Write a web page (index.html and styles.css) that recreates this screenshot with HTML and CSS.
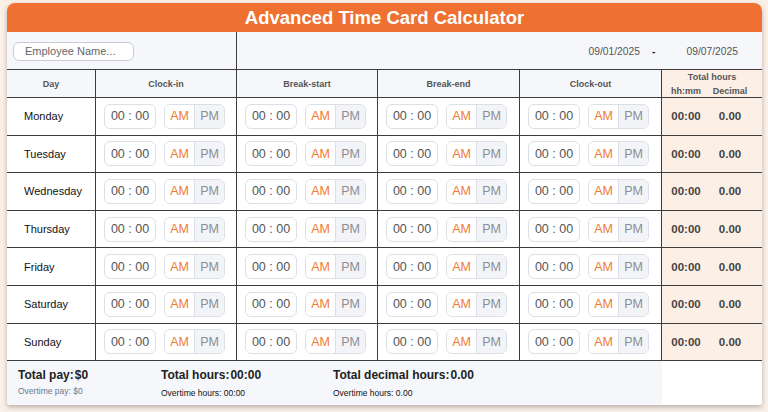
FILE: index.html
```html
<!DOCTYPE html>
<html lang="en">
<head>
<meta charset="utf-8">
<title>Advanced Time Card Calculator</title>
<link rel="stylesheet" href="styles.css">
</head>
<body>
<div class="card">
  <div class="title">Advanced Time Card Calculator</div>
  <div class="grid">
    <div class="cell top name-cell"><div class="name-input">Employee Name...</div></div>
    <div class="cell top dates-cell">
      <span class="date">09/01/2025</span><span class="dash">-</span><span class="date">09/07/2025</span>
    </div>

    <div class="cell head">Day</div>
    <div class="cell head">Clock-in</div>
    <div class="cell head">Break-start</div>
    <div class="cell head">Break-end</div>
    <div class="cell head">Clock-out</div>
    <div class="cell head total-head last">
      <div class="th-title">Total hours</div>
      <div class="th-sub"><span>hh:mm</span><span>Decimal</span></div>
    </div>
  </div>
  <div class="grid rows" id="rows"></div>
  <div class="footer">
    <div class="footer-main">
      <div class="sum">
        <div class="big">Total pay:<span>$0</span></div>
        <div class="small blue">Overtime pay: $0</div>
      </div>
      <div class="sum">
        <div class="big">Total hours:<span>00:00</span></div>
        <div class="small low">Overtime hours: 00:00</div>
      </div>
      <div class="sum">
        <div class="big">Total decimal hours:<span>0.00</span></div>
        <div class="small low">Overtime hours: 0.00</div>
      </div>
    </div>
    <div class="footer-side"></div>
  </div>
</div>
<script>
  var days = ["Monday","Tuesday","Wednesday","Thursday","Friday","Saturday","Sunday"];
  var rows = document.getElementById("rows");
  var timeCell = '<div class="cell time"><div class="tbox">00 : 00</div><div class="ampm"><span class="am">AM</span><span class="pm">PM</span></div></div>';
  var html = "";
  days.forEach(function (d) {
    html += '<div class="cell day">' + d + '</div>' + timeCell + timeCell + timeCell + timeCell +
      '<div class="cell total last"><span>00:00</span><span>0.00</span></div>';
  });
  rows.innerHTML = html;
</script>
</body>
</html>
```

FILE: styles.css
```css
html, body {
  margin: 0;
  padding: 0;
}
body {
  background: #fbf0e7;
  font-family: "Liberation Sans", Arial, Helvetica, sans-serif;
  padding: 3px 0 0 7px;
  height: 412px;
  box-sizing: border-box;
  overflow: hidden;
}
.card {
  width: 755px;
  background: #fff;
  border-radius: 8px 8px 3px 3px;
  box-shadow: 0 2px 5px rgba(0, 0, 0, 0.28);
  overflow: hidden;
}
.title {
  height: 29px;
  line-height: 29px;
  background: #ee7131;
  color: #fff;
  font-weight: bold;
  font-size: 18.5px;
  text-align: center;
}
.grid {
  display: grid;
  grid-template-columns: 89px 141px 141px 142px 142px 100px;
}
.grid.rows {
  grid-auto-rows: 37.6px;
}
.cell {
  box-sizing: border-box;
  border-right: 1px solid #3d3d3d;
  border-bottom: 1px solid #3d3d3d;
  display: flex;
  align-items: center;
}
.cell.last {
  border-right: none;
}
.top {
  height: 38px;
  background: #f5f7fb;
}
.name-cell {
  grid-column: 1 / 3;
  padding-left: 6px;
  padding-top: 1px;
}
.name-input {
  width: 121px;
  height: 19px;
  box-sizing: border-box;
  border: 1px solid #c9ccd2;
  border-radius: 6px;
  background: #fff;
  font-size: 11px;
  color: #666;
  padding-left: 11px;
  line-height: 17px;
}
.dates-cell {
  grid-column: 3 / 7;
  border-right: none;
  justify-content: flex-end;
  padding-right: 24px;
  padding-top: 1px;
  font-size: 10.3px;
  color: #555;
}
.dash {
  color: #222;
  font-weight: bold;
  margin: 0 31px 0 12px;
}
.head {
  height: 28px;
  background: #f5f7fb;
  justify-content: center;
  font-size: 9px;
  font-weight: bold;
  color: #555;
}
.total-head {
  background: #fcefe6;
  flex-direction: column;
  justify-content: center;
  gap: 4px;
  padding-top: 1px;
}
.th-sub {
  display: grid;
  grid-template-columns: 44px 44px;
  text-align: center;
  padding-right: 8px;
}
.day {
  padding-left: 17px;
  font-size: 11px;
  color: #111;
}
.time {
  padding-left: 8px;
  gap: 8px;
}
.tbox {
  width: 52px;
  height: 25px;
  box-sizing: border-box;
  border: 1px solid #dcdfe5;
  border-radius: 6px;
  font-size: 12.5px;
  color: #555;
  display: flex;
  align-items: center;
  justify-content: center;
  background: #fff;
}
.ampm {
  width: 61px;
  height: 25px;
  box-sizing: border-box;
  border: 1px solid #dcdfe5;
  border-radius: 6px;
  display: flex;
  overflow: hidden;
  font-size: 12.5px;
}
.ampm span {
  flex: 1;
  display: flex;
  align-items: center;
  justify-content: center;
}
.am {
  color: #f07a32;
  background: #fff;
  border-right: 1px solid #dcdfe5;
}
.pm {
  color: #8a8d93;
  background: #f3f4f8;
}
.total {
  background: #fcefe6;
  display: grid;
  grid-template-columns: 44px 44px;
  padding-left: 2px;
  text-align: center;
  font-size: 11.5px;
  font-weight: bold;
  color: #444;
}
.footer {
  display: flex;
  height: 44px;
}
.footer-main {
  width: 655px;
  background: #f5f7fb;
  display: grid;
  grid-template-columns: 143px 172px 1fr;
  padding-left: 11px;
  box-sizing: border-box;
}
.footer-side {
  flex: 1;
  background: #fff;
}
.sum {
  padding-top: 7px;
}
.big {
  font-size: 12px;
  font-weight: bold;
  color: #222;
}
.big span {
  margin-left: 1px;
}
.small {
  font-size: 8.5px;
  margin-top: 4px;
}
.small.blue {
  color: #6b7a90;
}
.small.low {
  color: #111;
  margin-top: 6px;
}
```
